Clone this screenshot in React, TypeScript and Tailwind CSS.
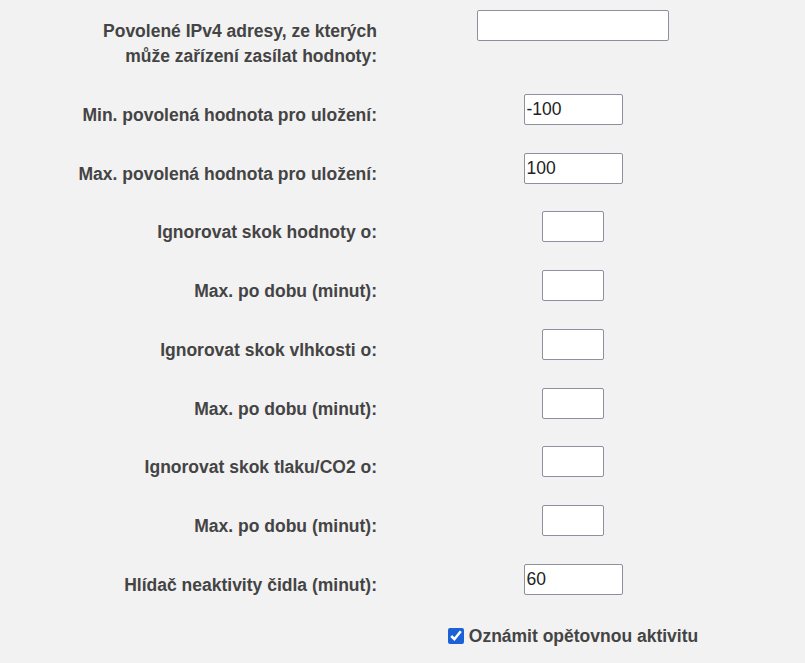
import React, { useState } from 'react';

type Field = {
    label: string[];
    value: string;
    width: string;
};

const fields: Field[] = [
    { label: ['Povolené IPv4 adresy, ze kterých', 'může zařízení zasílat hodnoty:'], value: '', width: 'w-[192px]' },
    { label: ['Min. povolená hodnota pro uložení:'], value: '-100', width: 'w-[99px]' },
    { label: ['Max. povolená hodnota pro uložení:'], value: '100', width: 'w-[99px]' },
    { label: ['Ignorovat skok hodnoty o:'], value: '', width: 'w-[62px]' },
    { label: ['Max. po dobu (minut):'], value: '', width: 'w-[62px]' },
    { label: ['Ignorovat skok vlhkosti o:'], value: '', width: 'w-[62px]' },
    { label: ['Max. po dobu (minut):'], value: '', width: 'w-[62px]' },
    { label: ['Ignorovat skok tlaku/CO2 o:'], value: '', width: 'w-[62px]' },
    { label: ['Max. po dobu (minut):'], value: '', width: 'w-[62px]' },
    { label: ['Hlídač neaktivity čidla (minut):'], value: '60', width: 'w-[99px]' },
];

const App: React.FC = () => {
    const [values, setValues] = useState(fields.map((f) => f.value));
    const [notify, setNotify] = useState(true);

    return (
        <div className="min-h-[663px] bg-[#f2f2f2] pt-[10px] text-[17.5px] text-[#444] font-['Liberation_Sans',Arial,sans-serif]">
            <div className="flex flex-col gap-[24.75px]">
                {fields.map((f, i) => (
                    <div key={i} className="grid grid-cols-[377px_392px] items-start">
                        <div className="pt-[9px] text-right font-bold leading-[25px]">
                            {f.label.map((line, j) => (
                                <div key={j}>{line}</div>
                            ))}
                        </div>
                        <div className="flex justify-center">
                            <input
                                type="text"
                                value={values[i]}
                                onChange={(e) => {
                                    const next = [...values];
                                    next[i] = e.target.value;
                                    setValues(next);
                                }}
                                className={`${f.width} h-[31px] rounded-[2px] border border-[#8f8f9d] bg-white px-[2px] text-[17.5px] text-[#222] outline-none`}
                            />
                        </div>
                    </div>
                ))}

                {/* Checkbox */}
                <div className="grid grid-cols-[377px_392px] mt-[1px]">
                    <div />
                    <label className="flex items-center justify-center gap-[5px] font-bold leading-[25px]">
                        <input
                            type="checkbox"
                            checked={notify}
                            onChange={(e) => setNotify(e.target.checked)}
                            className="h-4 w-4 accent-[#1a62d6]"
                        />
                        <span>Oznámit opětovnou aktivitu</span>
                    </label>
                </div>
            </div>
        </div>
    );
};

export default App;
